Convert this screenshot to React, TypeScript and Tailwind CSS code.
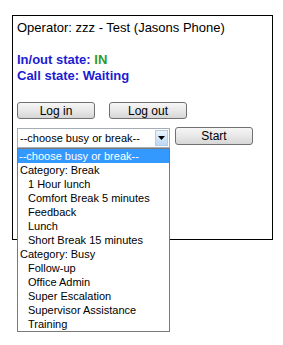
const breakItems = ['1 Hour lunch', 'Comfort Break 5 minutes', 'Feedback', 'Lunch', 'Short Break 15 minutes']
const busyItems = ['Follow-up', 'Office Admin', 'Super Escalation', 'Supervisor Assistance', 'Training']

function Btn({ label, className }: { label: string; className?: string }) {
    return (
        <div
            className={`flex items-center justify-center rounded-[3px] border border-[#707070] bg-gradient-to-b from-[#f6f6f6] via-[#e8e8e8] to-[#d6d6d6] text-[12px] text-black ${className ?? ''}`}
        >
            {label}
        </div>
    )
}

export default function App() {
    return (
        <div className="relative h-[345px] w-[283px] bg-white pl-[12px] pt-[15px] font-['Liberation_Sans',Arial,sans-serif] text-black">
            <div className="h-[225px] w-[261px] border border-black pl-[4px] pt-[4px]">
                <div className="text-[13px] leading-[16px]">Operator: zzz - Test (Jasons Phone)</div>
                <div className="mt-[16px] text-[13px] font-bold leading-[16px] text-[#1c1cd0]">
                    In/out state: <span className="text-[#2e9a2e]">IN</span>
                </div>
                <div className="text-[13px] font-bold leading-[16px] text-[#1c1cd0]">Call state: Waiting</div>

                <div className="mt-[18px] flex gap-[14px]">
                    <Btn label="Log in" className="h-[17px] w-[78px]" />
                    <Btn label="Log out" className="h-[17px] w-[78px]" />
                </div>

                <div className="mt-[8px] flex items-start gap-[5px]">
                    {/* select */}
                    <div className="mt-[1px] flex h-[20px] w-[153px] items-center border border-[#a5acb5] bg-white">
                        <span className="flex-1 pl-[2px] text-[11px] leading-none">--choose busy or break--</span>
                        <div className="mr-[1px] flex h-[16px] w-[13px] items-center justify-center border border-[#b4cde6] bg-gradient-to-b from-[#eaf4fc] to-[#bcd9f3]">
                            <svg width="7" height="4" viewBox="0 0 7 4">
                                <path d="M0 0h7L3.5 4z" fill="#000" />
                            </svg>
                        </div>
                    </div>
                    <Btn label="Start" className="h-[18px] w-[78px]" />
                </div>
            </div>

            {/* open dropdown list */}
            <div className="absolute left-[17px] top-[148px] w-[153px] border border-[#7a7a7a] bg-white text-[11px]">
                <div className="h-[14px] bg-[#3399ff] pl-[1px] leading-[14px] text-white">--choose busy or break--</div>
                <div className="h-[14px] pl-[2px] leading-[14px]">Category: Break</div>
                {breakItems.map((t) => (
                    <div key={t} className="h-[14px] pl-[10px] leading-[14px]">{t}</div>
                ))}
                <div className="h-[14px] pl-[2px] leading-[14px]">Category: Busy</div>
                {busyItems.map((t) => (
                    <div key={t} className="h-[14px] pl-[10px] leading-[14px]">{t}</div>
                ))}
            </div>
        </div>
    )
}
